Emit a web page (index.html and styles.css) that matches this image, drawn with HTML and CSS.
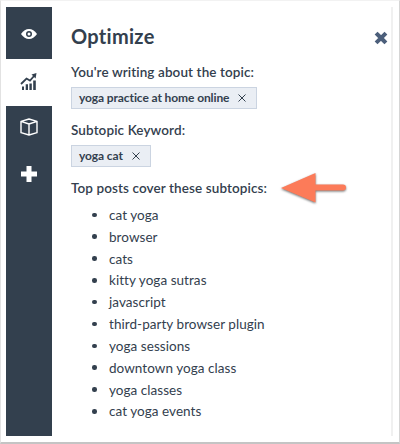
FILE: index.html
```html
<!DOCTYPE html>
<html lang="en">
<head>
<meta charset="utf-8">
<title>Optimize</title>
<link rel="stylesheet" href="styles.css">
</head>
<body>
<div class="frame">
  <div class="app">
    <nav class="rail">
      <a class="tab tab-view"><svg width="18" height="12" viewBox="0 0 18 12"><path d="M1 6Q4.500 1 9 1t8 5Q13.500 11 9 11T1 6Z" fill="#fff"/><circle cx="9" cy="6" r="3" fill="#33404e"/><circle cx="9" cy="6" r="1.500" fill="#fff"/></svg></a>
      <a class="tab tab-active"><svg width="18" height="19" viewBox="0 0 18 19"><path d="M2 14.500h2V18H2zM5.700 12.300H8V18H5.700zM9.400 11.500h2.400V18H9.400zM13.200 8.500h2.600V18h-2.600z" fill="#33404e"/><path d="M1 12 6.500 6.500l3.500 2L14.500 3.500" fill="none" stroke="#33404e" stroke-width="1.800"/><path d="M11.500 2.500 16.500 1l-.9 5.500z" fill="#33404e"/></svg></a>
      <a class="tab tab-box"><svg width="18" height="18" viewBox="0 0 18 18" fill="none" stroke="#fff" stroke-width="1.400" stroke-linejoin="round"><path d="M1 3.300 9 1l8 2.300v11.400L9 17l-8-2.300zM1 3.300 9 6l8-2.700M9 6v11"/></svg></a>
      <a class="tab tab-add"><svg width="18" height="18" viewBox="0 0 18 18"><path d="M6.500 1h5v5.500H17v5h-5.500V17h-5v-5.500H1v-5h5.500z" fill="#fff"/></svg></a>
    </nav>
    <main class="panel">
      <header class="head">
        <h1 class="title">Optimize</h1>
        <svg class="close" width="14" height="14" viewBox="0 0 14 14"><path d="M3.500 3.500l7 7M10.500 3.500l-7 7" stroke="#4c5f7b" stroke-width="4" stroke-linecap="square"/></svg>
      </header>
      <h2 class="label label-topic">You're writing about the topic:</h2>
      <div class="chip"><span class="chip-text">yoga practice at home online</span><svg width="8" height="8" viewBox="0 0 8 8"><path d="M.5.5l7 7M7.500.5l-7 7" stroke="#33404e" stroke-width="1"/></svg></div>
      <h2 class="label label-key">Subtopic Keyword:</h2>
      <div class="chip"><span class="chip-text">yoga cat</span><svg width="8" height="8" viewBox="0 0 8 8"><path d="M.5.5l7 7M7.500.5l-7 7" stroke="#33404e" stroke-width="1"/></svg></div>
      <div class="top-row">
        <h2 class="label label-top">Top posts cover these subtopics:</h2>
        <svg class="arrow" width="70" height="36" viewBox="0 0 70 36"><path d="M3 17 37.500 2v11.500H65a3 3 0 0 1 0 6H37.500V31.500z" fill="#fc7b59"/></svg>
      </div>
      <ul class="topics">
        <li>cat yoga</li>
        <li>browser</li>
        <li>cats</li>
        <li>kitty yoga sutras</li>
        <li>javascript</li>
        <li>third-party browser plugin</li>
        <li>yoga sessions</li>
        <li>downtown yoga class</li>
        <li>yoga classes</li>
        <li>cat yoga events</li>
      </ul>
    </main>
  </div>
</div>
</body>
</html>
```
FILE: styles.css
```css
* { box-sizing: border-box; }
body {
  margin: 0;
  background: #fff;
  color: #33404e;
  font-family: Lato, sans-serif;
}
svg { display: block; flex: none; }
.frame {
  height: 444px;
  padding: 6px 6px 0 5px;
  border: 1px solid #e2e2e2;
  border-top-color: #f2f2f2;
  border-right-color: #d5d5d5;
  border-bottom: 2px solid #c4c4c4;
}
.app {
  display: flex;
  width: 387px;
  height: 429px;
  border-right: 2px solid #f0f0f0;
}
.rail {
  display: flex;
  flex-direction: column;
  width: 46px;
  background: #33404e;
}
.tab { display: flex; justify-content: center; }
.tab-view { height: 52px; padding-top: 21px; }
.tab-active { height: 47px; padding-top: 13px; background: #fff; }
.tab-box { height: 47px; padding-top: 12px; }
.tab-add { height: 47px; padding-top: 12px; }
.panel { flex: 1; padding: 16px 3px 0 19px; }
.head { display: flex; justify-content: space-between; }
.title {
  margin: 0;
  font-size: 20px;
  font-weight: 700;
  line-height: 26px;
  letter-spacing: .3px;
}
.close { margin-top: 8px; }
.label {
  margin: 0;
  font-size: 13.5px;
  font-weight: 600;
  line-height: 16px;
  letter-spacing: .1px;
  white-space: nowrap;
}
.label-topic { margin-top: 15px; }
.label-key { margin-top: 13px; }
.chip {
  display: flex;
  align-items: center;
  gap: 9px;
  width: fit-content;
  height: 22px;
  margin-top: 7px;
  padding: 0 10px 0 7px;
  border: 1px solid #cbd4e1;
  background: #eaeef4;
}
.chip-text {
  font-size: 12px;
  font-weight: 700;
  line-height: 20px;
  letter-spacing: -.1px;
  white-space: nowrap;
}
.top-row { display: flex; height: 33px; margin-top: 4px; }
.label-top { margin-top: 9px; width: 207px; }
.arrow { filter: drop-shadow(0 1px 1px rgba(0, 0, 0, .55)); }
.topics {
  margin: 0;
  padding: 0;
  list-style: none;
}
.topics li {
  display: flex;
  align-items: center;
  gap: 12.500px;
  height: 21.840px;
  padding-left: 21px;
  font-size: 13.5px;
  line-height: 20px;
  letter-spacing: .05px;
}
.topics li::before {
  content: "";
  width: 4.500px;
  height: 4.500px;
  border-radius: 50%;
  background: #33404e;
}
```
